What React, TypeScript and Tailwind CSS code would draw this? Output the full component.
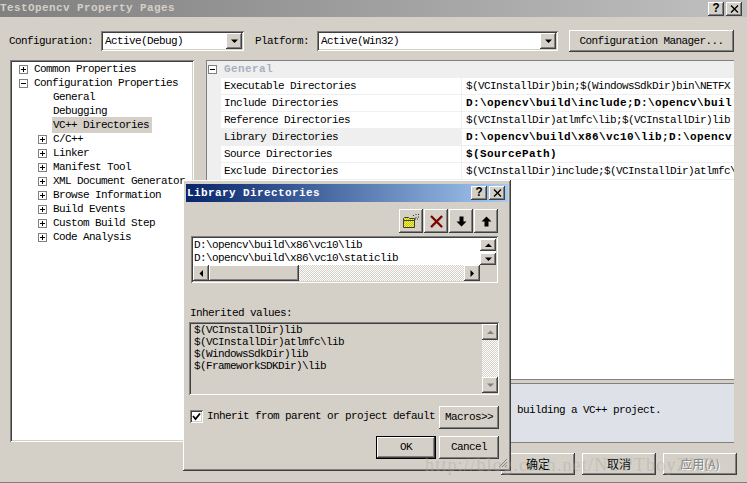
import React from 'react';

const raised = 'shadow-[inset_-1px_-1px_0_#404040,inset_1px_1px_0_#ffffff,inset_-2px_-2px_0_#808080]';
const sunken = 'shadow-[inset_1px_1px_0_#808080,inset_-1px_-1px_0_#ffffff,inset_2px_2px_0_#404040,inset_-2px_-2px_0_#d4d0c8]';

const Expander = ({ open }: { open?: boolean }) => (
  <svg width="9" height="9" viewBox="0 0 9 9" className="shrink-0">
    <rect x="0.5" y="0.5" width="8" height="8" fill="#fff" stroke="#808080" />
    <path d={open ? 'M2 4.5h5' : 'M2 4.5h5M4.5 2v5'} stroke="#000" />
  </svg>
);

const Arrow = ({ dir, color = '#000' }: { dir: 'up' | 'down' | 'left' | 'right'; color?: string }) => {
  const pts = {
    up: '0,4 7,4 3.5,0.5',
    down: '0,0.5 7,0.5 3.5,4',
    left: '4,0 4,7 0.5,3.5',
    right: '0.5,0 0.5,7 4,3.5',
  }[dir];
  const vertical = dir === 'up' || dir === 'down';
  return (
    <svg width={vertical ? 7 : 5} height={vertical ? 5 : 7} viewBox={vertical ? '0 0 7 5' : '0 0 5 7'}>
      <polygon points={pts} fill={color} />
    </svg>
  );
};

const TitleButton = ({ children }: { children: React.ReactNode }) => (
  <div className={`w-4 h-[14px] bg-[#d4d0c8] flex items-center justify-center text-[12px] font-bold text-black tracking-normal ${raised}`}>
    {children}
  </div>
);

const CloseGlyph = () => (
  <svg width="9" height="8" viewBox="0 0 9 8">
    <path d="M1 0.5l7 7M8 0.5l-7 7" stroke="#000" strokeWidth="1.4" />
  </svg>
);

const Combo = ({ value, width }: { value: string; width: string }) => (
  <div className={`${width} h-[20px] bg-white flex items-center pl-[4px] pr-[2px] ${sunken}`}>
    <span className="flex-1 whitespace-nowrap">{value}</span>
    <div className={`w-4 h-4 bg-[#d4d0c8] flex items-center justify-center ${raised}`}>
      <Arrow dir="down" />
    </div>
  </div>
);

const tree: { label: string; depth: number; expander?: 'plus' | 'minus'; selected?: boolean }[] = [
  { label: 'Common Properties', depth: 0, expander: 'plus' },
  { label: 'Configuration Properties', depth: 0, expander: 'minus' },
  { label: 'General', depth: 1 },
  { label: 'Debugging', depth: 1 },
  { label: 'VC++ Directories', depth: 1, selected: true },
  { label: 'C/C++', depth: 1, expander: 'plus' },
  { label: 'Linker', depth: 1, expander: 'plus' },
  { label: 'Manifest Tool', depth: 1, expander: 'plus' },
  { label: 'XML Document Generator', depth: 1, expander: 'plus' },
  { label: 'Browse Information', depth: 1, expander: 'plus' },
  { label: 'Build Events', depth: 1, expander: 'plus' },
  { label: 'Custom Build Step', depth: 1, expander: 'plus' },
  { label: 'Code Analysis', depth: 1, expander: 'plus' },
];

const props: { label: string; value: string; bold?: boolean; tint?: boolean }[] = [
  { label: 'Executable Directories', value: '$(VCInstallDir)bin;$(WindowsSdkDir)bin\\NETFX' },
  { label: 'Include Directories', value: 'D:\\opencv\\build\\include;D:\\opencv\\buil', bold: true },
  { label: 'Reference Directories', value: '$(VCInstallDir)atlmfc\\lib;$(VCInstallDir)lib' },
  { label: 'Library Directories', value: 'D:\\opencv\\build\\x86\\vc10\\lib;D:\\opencv', bold: true, tint: true },
  { label: 'Source Directories', value: '$(SourcePath)', bold: true },
  { label: 'Exclude Directories', value: '$(VCInstallDir)include;$(VCInstallDir)atlmfc\\' },
];

const FooterButton = ({ children, disabled }: { children: React.ReactNode; disabled?: boolean }) => (
  <div
    className={`w-[74px] h-[22px] flex items-center justify-center text-[12px] tracking-normal ${raised} ${disabled ? 'text-[#808080] [text-shadow:1px_1px_0_#ffffff]' : 'text-black'}`}
    style={{ fontFamily: '"Noto Sans CJK SC", sans-serif' }}
  >
    {children}
  </div>
);

const ToolButton = ({ children }: { children: React.ReactNode }) => (
  <div className={`w-6 h-6 bg-[#d4d0c8] flex items-center justify-center ${raised}`}>{children}</div>
);

const ScrollButton = ({ dir, color, size = 'w-4 h-4' }: { dir: 'up' | 'down' | 'left' | 'right'; color?: string; size?: string }) => (
  <div className={`${size} shrink-0 bg-[#d4d0c8] flex items-center justify-center ${raised}`}>
    <Arrow dir={dir} color={color} />
  </div>
);

const checker = 'bg-[repeating-conic-gradient(#d4d0c8_0_25%,#ffffff_0_50%)] bg-[length:2px_2px]';

const LibraryDialog = () => (
  <div className={`absolute left-[183px] top-[180px] w-[328px] h-[291px] bg-[#d4d0c8] pt-[4px] px-[3px] z-10 flex flex-col ${raised}`}>
    <div className="h-[18px] shrink-0 bg-gradient-to-r from-[#0a246a] to-[#a6caf0] flex items-center pl-[1px] pr-[3px]">
      <span className="flex-1 font-bold text-white text-[11px] tracking-[0.4px]">Library Directories</span>
      <div className="flex gap-[2px]">
        <TitleButton>?</TitleButton>
        <TitleButton><CloseGlyph /></TitleButton>
      </div>
    </div>

    <div className="flex justify-end gap-px mt-[7px] pr-[10px]">
      <ToolButton>
        <svg width="18" height="17" viewBox="0 0 18 17">
          <defs>
            <pattern id="folderDither" width="2" height="2" patternUnits="userSpaceOnUse">
              <rect width="2" height="2" fill="#ffff00" />
              <rect width="1" height="1" fill="#b8b860" />
              <rect x="1" y="1" width="1" height="1" fill="#b8b860" />
            </pattern>
          </defs>
          <path d="M1.5 7.5v-2l1-1h4l1 1h5v9h-11z" fill="url(#folderDither)" stroke="#404020" />
          <path d="M1.5 7.5h11" stroke="#404020" />
          <path d="M14 1v1M14 4v1M16 2l1-1M12 3l-1-1M16 4h1M15 6h1M13 6h1" stroke="#303030" />
        </svg>
      </ToolButton>
      <ToolButton>
        <svg width="15" height="15" viewBox="0 0 15 15">
          <path d="M2.5 2.5l11 11M13.5 2.5l-11 11" stroke="#b0a8a0" strokeWidth="2" />
          <path d="M2 2l11 11M13 2L2 13" stroke="#800000" strokeWidth="2.2" />
        </svg>
      </ToolButton>
      <ToolButton>
        <svg width="11" height="11" viewBox="0 0 11 11">
          <path d="M3.5 0.5h4v5h3l-5 5-5-5h3z" fill="#000" />
        </svg>
      </ToolButton>
      <ToolButton>
        <svg width="11" height="11" viewBox="0 0 11 11">
          <path d="M3.5 10.5h4v-5h3l-5-5-5 5h3z" fill="#000" />
        </svg>
      </ToolButton>
    </div>

    <div className={`ml-[5px] mt-[3px] w-[307px] h-[47px] bg-white p-[2px] flex flex-col ${sunken}`}>
      <div className="flex flex-1 min-h-0">
        <div className="flex-1 pl-[1px] pt-px leading-[13px] text-black">
          <div>D:\opencv\build\x86\vc10\lib</div>
          <div>D:\opencv\build\x86\vc10\staticlib</div>
        </div>
        <div className="w-4 flex flex-col justify-between pt-px">
          <ScrollButton dir="up" size="w-4 h-[12px]" />
          <ScrollButton dir="down" size="w-4 h-[12px]" />
        </div>
      </div>
      <div className="flex h-4 shrink-0 bg-[#d4d0c8]">
        <ScrollButton dir="left" />
        <div className={`w-[90px] h-4 bg-[#d4d0c8] ${raised}`} />
        <div className={`flex-1 ${checker}`} />
        <ScrollButton dir="right" />
        <div className="w-4" />
      </div>
    </div>

    <div className="ml-[4px] mt-[24px] leading-[12px]">Inherited values:</div>

    <div className={`ml-[3px] mt-[3px] w-[310px] h-[73px] bg-[#d4d0c8] py-[2px] pl-[2px] pr-px flex ${sunken}`}>
      <div className="flex-1 pl-[3px] leading-[12px]">
        <div>$(VCInstallDir)lib</div>
        <div>$(VCInstallDir)atlmfc\lib</div>
        <div>$(WindowsSdkDir)lib</div>
        <div>$(FrameworkSDKDir)\lib</div>
      </div>
      <div className="w-4 flex flex-col">
        <ScrollButton dir="up" color="#808080" />
        <div className={`flex-1 ${checker}`} />
        <ScrollButton dir="down" color="#808080" />
      </div>
    </div>

    <div className="flex items-center ml-[4px] mt-[11px] h-[23px] pr-[9px]">
      <div className={`w-[13px] h-[13px] -mt-[2px] bg-white flex items-center justify-center ${sunken}`}>
        <svg width="9" height="9" viewBox="0 0 9 9">
          <path d="M1 4l2.5 3L8 1.5" fill="none" stroke="#000" strokeWidth="1.8" />
        </svg>
      </div>
      <span className="ml-[4px] -mt-[2px] flex-1 whitespace-nowrap">Inherit from parent or project default</span>
      <div className={`w-[60px] h-[23px] flex items-center justify-center ${raised}`}>Macros&gt;&gt;</div>
    </div>

    <div className="flex justify-end gap-[3px] mt-[7px] pr-[9px]">
      <div className="w-[60px] h-[23px] border border-black">
        <div className={`w-full h-full flex items-center justify-center ${raised}`}>OK</div>
      </div>
      <div className={`w-[60px] h-[23px] flex items-center justify-center ${raised}`}>Cancel</div>
    </div>

    <svg width="10" height="10" viewBox="0 0 10 10" className="absolute right-[3px] bottom-[3px]">
      <path d="M9 1L1 9M9 4L4 9M9 7L7 9" stroke="#808080" />
    </svg>
  </div>
);

export default function App() {
  return (
    <div
      className="relative w-[747px] h-[483px] overflow-hidden bg-[#d4d0c8] text-black text-[11px] tracking-[-0.6px] flex flex-col border-b border-[#808080]"
      style={{ fontFamily: '"Liberation Mono", monospace' }}
    >
      <div className="h-[17px] shrink-0 bg-gradient-to-r from-[#808080] to-[#c0c0c0] flex items-center pr-[5px]">
        <span className="flex-1 font-bold text-[#d4d0c8] text-[11px] tracking-[0.4px]">TestOpencv Property Pages</span>
        <div className="flex gap-[2px]">
          <TitleButton>?</TitleButton>
          <TitleButton><CloseGlyph /></TitleButton>
        </div>
      </div>

      <div className="flex items-center h-[22px] mt-[13px] pl-[9px]">
        <span className="w-[92px]">Configuration:</span>
        <Combo value="Active(Debug)" width="w-[143px]" />
        <span className="ml-[11px] w-[62px]">Platform:</span>
        <Combo value="Active(Win32)" width="w-[241px]" />
        <div className={`ml-[11px] w-[165px] h-[22px] flex items-center justify-center ${raised}`}>Configuration Manager...</div>
      </div>

      <div className="flex mt-[8px] ml-[10px] h-[383px] gap-[12px]">
        <div className={`w-[184px] mb-px bg-white pt-[2px] overflow-hidden ${sunken}`}>
          {tree.map((n) => (
            <div key={n.label} className={`flex items-center h-[14px] whitespace-nowrap ${n.depth ? 'pl-[28px]' : 'pl-[9px]'}`}>
              <span className="w-[15px] shrink-0">{n.expander && <Expander open={n.expander === 'minus'} />}</span>
              <span className={n.selected ? 'bg-[#d4d0c8] -ml-px pl-px pr-[3px]' : ''}>{n.label}</span>
            </div>
          ))}
        </div>

        <div className="w-[528px] flex flex-col border-l border-t border-[#808080]">
          <div className="h-[320px] bg-white flex flex-col border-b border-[#808080] overflow-hidden">
            <div className="h-[17px] shrink-0 bg-[#efefef] flex items-center">
              <span className="w-[15px] flex pl-px"><Expander open /></span>
              <span className="font-bold text-[#a8b0c0] pl-[2px] tracking-[0.4px]">General</span>
            </div>
            {props.map((p) => (
              <div key={p.label} className="h-[17px] shrink-0 flex">
                <div className="w-[14px] bg-[#efefef]" />
                <div className={`w-[241px] pl-[3px] flex items-center border-b border-r border-[#efefef] ${p.tint ? 'bg-[#efefef]' : ''}`}>{p.label}</div>
                <div className={`flex-1 pl-[4px] flex items-center border-b border-[#efefef] whitespace-nowrap overflow-hidden ${p.bold ? 'font-bold tracking-[0.4px]' : ''}`}>{p.value}</div>
              </div>
            ))}
          </div>
          <div className="mt-[3px] h-[60px] pb-[6px] bg-[#dee1e8] border-t border-b border-[#808080] flex items-center pl-[310px]">
            building a VC++ project.
          </div>
        </div>
      </div>

      <div className="flex justify-end gap-[7px] mt-[10px] pr-[10px]">
        <FooterButton>确定</FooterButton>
        <FooterButton>取消</FooterButton>
        <FooterButton disabled>应用(A)</FooterButton>
      </div>

      <LibraryDialog />

      <div
        className="absolute left-[425px] top-[452px] z-20 text-[18px] tracking-[1.2px] text-[#a8a49c]/40 whitespace-nowrap pointer-events-none"
        style={{ fontFamily: '"Liberation Serif", serif' }}
      >
        http://blog.csdn.net/NUPTboyZHB
      </div>
    </div>
  );
}
